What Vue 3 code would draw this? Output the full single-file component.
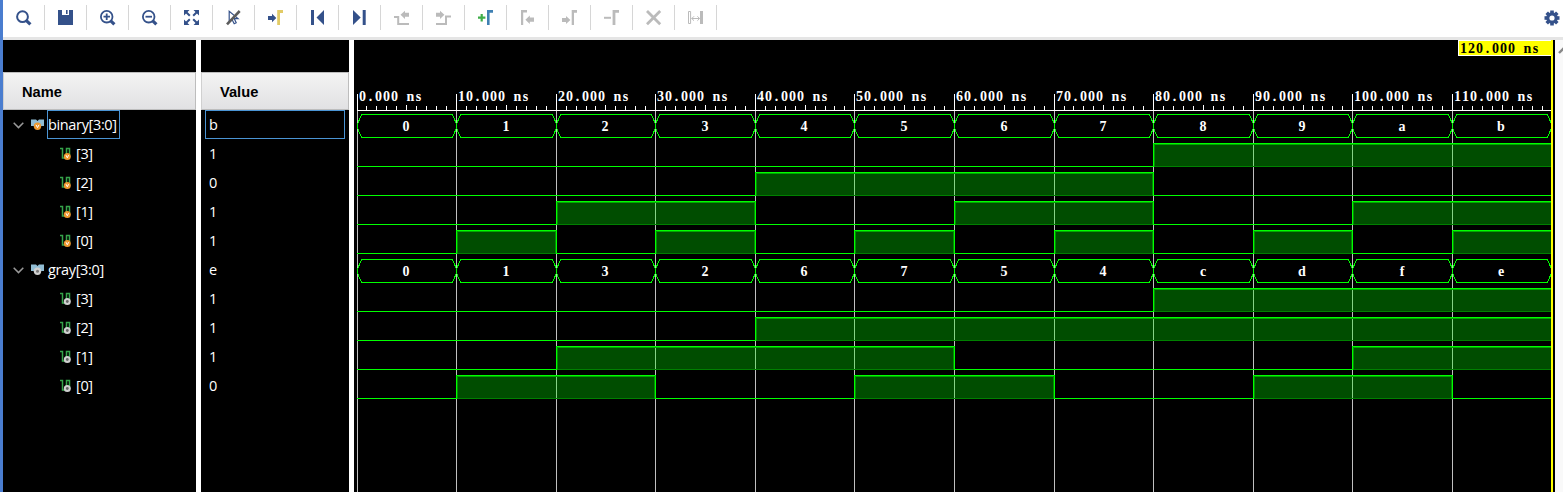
<script setup>
const groups = [
  { name: 'binary[3:0]', value: 'b', kind: 'v', selected: true, bus: '0123456789ab' },
  { name: 'gray[3:0]', value: 'e', kind: 'g', selected: false, bus: '01326754cdfe' },
]
const rows = groups.flatMap((g) => [
  { ...g, isBus: true },
  ...[3, 2, 1, 0].map((bit) => {
    const bits = [...g.bus].map((c) => (parseInt(c, 16) >> bit) & 1)
    return { name: `[${bit}]`, value: String(bits[11]), kind: g.kind, isBus: false, bits }
  }),
])

// waveform canvas starts at the left edge of the wave pane
const START = 3
const STEP = 99.58
const END = 1197
const RULER = 70
const ROW = 29
const px = (t) => Math.floor(START + t * STEP)
const majors = Array.from({ length: 12 }, (_, i) => ({ x: px(i), label: i ? `${i}0.000 ns` : '0.000 ns' }))
const ticks = []
for (let i = 1; i < 120; i++) if (i % 10) ticks.push({ x: px(i / 10), y: i % 10 === 5 ? 65 : 66 })

const charXs = (x, text) => [...text].map((_, i) => x + 4 + i * 8).join(' ')

const waves = rows.map((r, k) => {
  const top = RULER + k * ROW + 4.5
  const bottom = top + 23
  if (r.isBus) {
    const mid = top + 11.5
    const cells = [...r.bus].map((c, i) => {
      const a = px(i) + 0.5
      const b = (i === 11 ? END : px(i + 1)) + 0.5
      return {
        label: c,
        x: Math.round((a + b) / 2) - 1,
        d: `M${a} ${mid - 2}V${mid + 2}L${a + 4} ${bottom}H${b - 4}L${b} ${mid + 2}V${mid - 2}L${b - 4} ${top}H${a + 4}Z`,
      }
    })
    return { bus: true, cells, y: top + 15.5 }
  }
  const runs = []
  r.bits.forEach((v, i) => {
    const last = runs[runs.length - 1]
    if (last && last.v === v) last.to = i + 1
    else runs.push({ v, from: i, to: i + 1 })
  })
  return {
    bus: false,
    top: top - 0.5,
    runs: runs.map((s) => ({ v: s.v, a: px(s.from), b: s.to === 12 ? END : px(s.to), end: s.to === 12 })),
  }
})

const tools = ['search', 'save', 'zin', 'zout', 'fit', 'nocur', 'goto', 'first', 'last', 'prevt', 'nextt', 'add', 'prevm', 'nextm', 'remove', 'close', 'span']
</script>

<template>
  <div class="window">
    <div class="edge"></div>
    <div class="main">
      <div class="toolbar">
        <div v-for="t in tools" :key="t" class="tool">
          <svg width="16" height="16" viewBox="0 0 16 16">
            <template v-if="t === 'search'">
              <circle cx="6.5" cy="6.7" r="5.4" fill="none" stroke="#34518a" stroke-width="2" />
              <path d="M10.4 10.7L14.4 14.4" stroke="#34518a" stroke-width="3.2" />
            </template>
            <template v-else-if="t === 'save'">
              <path d="M0 0H4V5H11V0H15V15H0Z" fill="#34518a" />
              <path d="M8 0h1.6v4H8z" fill="#34518a" />
            </template>
            <template v-else-if="t === 'zin' || t === 'zout'">
              <circle cx="6.7" cy="6.7" r="5.8" fill="none" stroke="#34518a" stroke-width="1.8" />
              <path d="M10.5 10.7L14.4 14.4" stroke="#34518a" stroke-width="3.2" />
              <path :d="t === 'zin' ? 'M3.5 6.7H10M6.7 3.5V10' : 'M3.5 6.7H10'" stroke="#34518a" stroke-width="1.8" />
            </template>
            <template v-else-if="t === 'fit'">
              <path d="M0 0H5.5L0 5.5ZM15 0H9.5L15 5.5ZM0 15H5.5L0 9.5ZM15 15H9.5L15 9.5Z" fill="#34518a" />
              <path d="M1 1L5.8 5.8M14 1L9.2 5.8M1 14L5.8 9.2M14 14L9.2 9.2" stroke="#34518a" stroke-width="2" />
            </template>
            <template v-else-if="t === 'nocur'">
              <path d="M3.2 1.3V12L6 9.4L8.2 13.8L10.2 12.8L8.2 8.6H12Z" fill="none" stroke="#34518a" stroke-width="1.2" />
              <path d="M1 14.3L13.7 1" stroke="#5c5c5c" stroke-width="2.6" />
            </template>
            <template v-else-if="t === 'goto'">
              <path d="M0 6H4V3.7L8.3 8L4 12.3V10H0Z" fill="#34518a" />
              <path d="M9.2 15V0H15V3H12V15Z" fill="#e2cb66" />
            </template>
            <template v-else-if="t === 'first'">
              <path d="M1 0H4V15H1ZM14 0V15L6.5 7.5Z" fill="#34518a" />
            </template>
            <template v-else-if="t === 'last'">
              <path d="M1 0V15L8.7 7.5ZM10.7 0H13.7V15H10.7Z" fill="#34518a" />
            </template>
            <template v-else-if="t === 'prevt'">
              <path d="M0 7H4.2V14H15" fill="none" stroke="#bbb" stroke-width="2" />
              <path d="M6.5 4.8L11 .7V2.8H15V6.8H11V8.9Z" fill="#bbb" />
            </template>
            <template v-else-if="t === 'nextt'">
              <path d="M0 14H10V6.5H15" fill="none" stroke="#bbb" stroke-width="2" />
              <path d="M8.4 4.8L4 .7V2.8H0V6.8H4V8.9Z" fill="#bbb" />
            </template>
            <template v-else-if="t === 'add'">
              <path d="M0 7.7H7.4M3.7 4V11.4" stroke="#3fae49" stroke-width="2.2" />
              <path d="M9 15V0H15V2.8H11.6V15Z" fill="#3f80b3" />
            </template>
            <template v-else-if="t === 'prevm'">
              <path d="M1 15V0H7V2.5H3.2V15Z" fill="#bbb" />
              <path d="M5.4 9.7L9.8 5.5V7.6H14V11.8H9.8V13.9Z" fill="#bbb" />
            </template>
            <template v-else-if="t === 'nextm'">
              <path d="M8.4 10L4 6V8H0V12H4V14Z" fill="#bbb" />
              <path d="M9.7 15V0H15V2.8H12V15Z" fill="#bbb" />
            </template>
            <template v-else-if="t === 'remove'">
              <path d="M0 6.8H7V8.8H0Z" fill="#bbb" />
              <path d="M8.6 15V0H15V2.8H11.4V15Z" fill="#bbb" />
            </template>
            <template v-else-if="t === 'close'">
              <path d="M1 1L14.2 14.2M14.2 1L1 14.2" stroke="#bbb" stroke-width="2.8" />
            </template>
            <template v-else>
              <path d="M.5 1.5H2.6V13.5H.5Z" fill="none" stroke="#bbb" />
              <path d="M12 1H15V14H12Z" fill="#bbb" />
              <path d="M3.5 8.5H11.5M6 6.3L3.8 8.5L6 10.7M9.4 6.3L11.6 8.5L9.4 10.7" fill="none" stroke="#bbb" />
            </template>
          </svg>
        </div>
        <svg class="gear" width="16" height="16" viewBox="-8 -8 16 16">
          <rect v-for="a in 4" :key="a" x="-1.8" y="-7.5" width="3.6" height="15" fill="#34518a" :transform="`rotate(${a * 45})`" />
          <circle r="4.1" fill="none" stroke="#34518a" stroke-width="3.4" />
          <circle r="2.6" fill="#fff" />
        </svg>
      </div>
      <div class="content">
        <div class="column names">
          <div class="head">Name</div>
          <div v-for="(r, i) in rows" :key="i" class="row" :class="{ bit: !r.isBus }">
            <svg v-if="r.isBus" class="chevron" width="11" height="7" viewBox="0 0 11 7">
              <path d="M.7 .8L5.5 5.6L10.3 .8" fill="none" stroke="#999" stroke-width="1.5" />
            </svg>
            <svg v-if="r.isBus" class="busicon" width="14" height="12" viewBox="0 0 14 12">
              <path d="M0 .6H5L6.5 2L8 .6H13V7H10L6.5 4.5L3 7H0Z" fill="#91bdd4" />
              <circle cx="6.5" cy="7.2" r="3.7" :fill="r.kind === 'v' ? '#ed982f' : '#d0d0d0'" />
              <path v-if="r.kind === 'v'" d="M5 5.8L6.5 8.6L8 5.8" fill="none" stroke="#fff" />
              <circle v-else cx="6.5" cy="7.2" r="1.5" fill="#777" />
            </svg>
            <svg v-else class="biticon" width="13" height="14" viewBox="0 0 13 14">
              <path d="M0 1.5H2.5V11H6.5V1.5H9.5V8" fill="none" stroke="#35a34a" stroke-width="1.5" />
              <circle cx="7.3" cy="9.5" r="3.5" :fill="r.kind === 'v' ? '#ed982f' : '#d0d0d0'" />
              <path v-if="r.kind === 'v'" d="M6 8.2L7.3 10.8L8.6 8.2" fill="none" stroke="#fff" />
              <circle v-else cx="7.3" cy="9.5" r="1.4" fill="#666" />
            </svg>
            <span class="label" :class="{ selected: r.selected }">{{ r.name }}</span>
          </div>
        </div>
        <div class="column values">
          <div class="head">Value</div>
          <div v-for="(r, i) in rows" :key="i" class="row">
            <span class="cell" :class="{ selected: r.selected }">{{ r.value }}</span>
          </div>
        </div>
        <svg class="wave" width="1201" height="452" viewBox="0 0 1201 452">
          <rect v-for="m in majors" :key="m.x" :x="m.x" y="71" width="1" height="381" fill="#c0c0c0" />
          <g fill="#fff">
            <rect v-for="m in majors" :key="m.x" :x="m.x" y="54" width="1" height="17" />
            <rect v-for="t in ticks" :key="t.x" :x="t.x" :y="t.y" width="1" :height="70 - t.y" />
            <rect :x="START" y="70" :width="END - START" height="1" />
            <text v-for="m in majors" :key="m.label" class="mono" :x="charXs(m.x + 1.5, m.label)" y="60.5">{{ m.label }}</text>
          </g>
          <template v-for="(w, k) in waves" :key="k">
            <g v-if="w.bus">
              <g v-for="(c, i) in w.cells" :key="i">
                <path :d="c.d" class="hex" />
                <text class="mono" fill="#fff" :x="c.x" :y="w.y + 0.5">{{ c.label }}</text>
              </g>
            </g>
            <g v-else>
              <g v-for="s in w.runs" :key="s.a">
                <template v-if="s.v">
                  <rect :x="s.a" :y="w.top" :width="s.b - s.a" height="24" fill="#0f0" fill-opacity=".3" />
                  <rect :x="s.a" :y="w.top + 23" :width="s.b - s.a" height="1" fill="#008000" />
                  <rect :x="s.a" :y="w.top + 1" :width="s.b - s.a" height="1" fill="#00a800" />
                  <rect :x="s.a + 1" :y="w.top + 1" width="1" height="23" fill="#009000" />
                  <rect v-if="!s.end" :x="s.b - 1" :y="w.top + 1" width="1" height="23" fill="#009000" />
                  <rect :x="s.a" :y="w.top" :width="s.b - s.a" height="1" fill="#0f0" />
                  <rect :x="s.a" :y="w.top" width="1" height="24" fill="#0f0" />
                  <rect v-if="!s.end" :x="s.b" :y="w.top" width="1" height="24" fill="#0f0" />
                </template>
                <rect v-else :x="s.a" :y="w.top + 23" :width="s.b - s.a" height="1" fill="#0f0" />
              </g>
            </g>
          </template>
          <rect x="1104" y="0" width="95" height="16" fill="#fff" />
          <rect x="1105" y="1" width="94" height="14" fill="#ff0" />
          <text class="mono" fill="#000" :x="charXs(1105.5, '120.000 ns')" y="12.5">120.000 ns</text>
          <rect x="1197" y="0" width="2" height="452" fill="#ff0" />
        </svg>
        <div class="scroll">
          <svg width="8" height="16" viewBox="0 0 8 16"><path d="M4 13L9 8" stroke="#888" stroke-width="2.4" /></svg>
        </div>
      </div>
    </div>
  </div>
</template>

<style>
body { background: #fff; overflow: hidden; }
</style>

<style scoped>
.window { display: flex; width: 1563px; height: 492px; overflow: hidden; }
.edge { width: 3px; background: #4a7dcf; flex: none; }
.main { flex: 1; min-width: 0; display: flex; flex-direction: column; }
.toolbar { display: flex; height: 37px; background: #fff; border-bottom: 3px solid #e5e5e5; flex: none; }
.tool { width: 42px; height: 25px; margin-top: 5px; box-sizing: border-box; border-right: 1px solid #d6d6d6; padding: 5px 0 0 13px; }
.tool svg { display: block; }
.gear { margin: 10px 3px 0 auto; flex: none; }
.content { display: flex; height: 452px; background: #fff; }
.column { background: #000; padding-top: 32px; box-sizing: border-box; flex: none; color: #fff; }
.names { width: 193px; margin-right: 5px; }
.values { width: 148px; margin-right: 5px; }
.head { height: 38px; box-sizing: border-box; border: 1px solid #bdbdbd; border-left-color: #d0d0d0; background: linear-gradient(#f3f3f3, #e1e1e3); color: #000; font: bold 14.67px/38px "Liberation Sans", Arial, sans-serif; padding-left: 18px; }
.row { height: 29px; display: flex; align-items: center; font: 14.5px/29px "Open Sans", "Noto Sans", sans-serif; letter-spacing: -0.35px; white-space: pre; }
.chevron { margin: 1px 0 0 10px; flex: none; }
.busicon { margin-left: 7px; flex: none; }
.biticon { margin-left: 57px; flex: none; }
.label { margin-left: 2px; height: 29px; box-sizing: border-box; border: 1px solid transparent; padding: 0 2px 0 0; line-height: 28px; }
.bit .label { margin-left: 2px; }
.cell { height: 29px; box-sizing: border-box; border: 1px solid transparent; margin-left: 4px; padding-left: 3px; width: 140px; line-height: 28px; }
.selected { border-color: #4a94d4; }
.wave { display: block; background: #000; flex: none; }
.mono { font: bold 14px "Liberation Serif", "Times New Roman", serif; text-anchor: middle; }
.hex { fill: none; stroke: #0f0; stroke-width: 1; shape-rendering: crispEdges; }
.scroll { flex: 1; background: #f9f9f9; overflow: hidden; }
.scroll svg { display: block; }
</style>
